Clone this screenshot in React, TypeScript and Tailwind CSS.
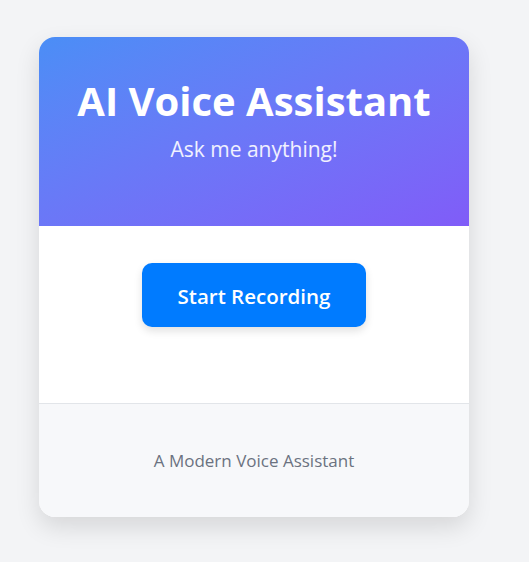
import React from 'react';

const App: React.FC = () => {
  return (
    <div className="min-h-[562px] bg-[#f3f4f6] pt-[37px] pl-[39px] font-['Open_Sans',sans-serif]">
      <div className="w-[430px] overflow-hidden rounded-2xl bg-white shadow-[0_10px_25px_rgba(0,0,0,0.12)]">
        {/* Header */}
        <div className="flex h-[189px] flex-col items-center bg-gradient-to-br from-[#4a8ef6] to-[#805cf8] pt-[40px] text-white">
          <h1 className="text-[40px] font-bold leading-[48px]">AI Voice Assistant</h1>
          <p className="mt-[10px] text-[21px] leading-[28px] text-white/90">Ask me anything!</p>
        </div>

        {/* Body */}
        <div className="flex flex-col items-center pt-[37px] pb-[76px]">
          <button className="h-[64px] w-[224px] rounded-[10px] bg-[#007bff] pt-[2px] text-[20.5px] font-semibold text-white shadow-[0_4px_8px_rgba(0,0,0,0.12)]">
            Start Recording
          </button>
        </div>

        {/* Footer */}
        <div className="border-t border-[#e2e5e9] bg-[#f7f8fa] pt-[45px] pb-[44px] text-center">
          <p className="text-[17px] leading-[24px] text-[#6b7280]">A Modern Voice Assistant</p>
        </div>
      </div>
    </div>
  );
};

export default App;
